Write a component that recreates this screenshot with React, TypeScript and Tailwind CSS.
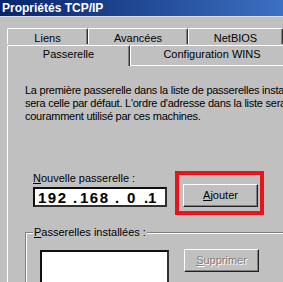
import React from 'react';

const Tab = ({ label, className }: { label: string; className: string }) => (
  <div
    className={`flex justify-center border-l border-t border-white border-r border-r-[#303030] shadow-[inset_-1px_0_0_#808080] rounded-t-[2px] ${className}`}
  >
    {label}
  </div>
);

const RaisedButton = ({ children, disabled }: { children: React.ReactNode; disabled?: boolean }) => (
  <button
    className={`w-[75px] h-[23px] flex items-center justify-center bg-[#c0c0c0] border border-t-white border-l-white border-r-[#202020] border-b-[#202020] shadow-[inset_-1px_-1px_0_#808080] text-[11px] ${
      disabled ? 'text-[#808080] [text-shadow:1px_1px_0_#ffffff]' : 'text-black'
    }`}
  >
    {children}
  </button>
);

export default function App() {
  return (
    <div
      className="w-[283px] h-[282px] overflow-hidden bg-[#c0c0c0] flex flex-col text-[11px] text-black"
      style={{ fontFamily: '"Liberation Sans", Arial, sans-serif' }}
    >
      {/* title bar */}
      <div className="h-[16px] shrink-0 bg-gradient-to-r from-[#0a246a] to-[#3c70c2] flex items-center pl-[2px]">
        <span className="text-white font-bold text-[12px] leading-none">Propriétés TCP/IP</span>
      </div>
      <div className="h-[1px] shrink-0 bg-[#dcdcdc]" />

      {/* tab rows */}
      <div className="pt-[11px] pl-[7px] flex flex-col shrink-0">
        <div className="flex h-[16px] w-[300px]">
          <Tab label="Liens" className="w-[81px] leading-[19px]" />
          <Tab label="Avancées" className="w-[100px] leading-[19px]" />
          <Tab label="NetBIOS" className="w-[95px] leading-[19px]" />
        </div>
        <div className="flex h-[21px] w-[330px] mt-[1px]">
          <Tab label="Passerelle" className="w-[123px] leading-[17px]" />
          <div className="w-[164px] flex flex-col">
            <Tab label="Configuration WINS" className="flex-1 leading-[17px]" />
            <div className="h-[1px] bg-white" />
          </div>
        </div>
      </div>

      {/* panel */}
      <div className="flex-1 ml-[7px] border-l border-white pl-[17px] flex flex-col">
        <div className="mt-[18px] leading-[13px] whitespace-nowrap tracking-[-0.25px]">
          <div>La première passerelle dans la liste de passerelles installées</div>
          <div>sera celle par défaut. L'ordre d'adresse dans la liste sera l'ordre</div>
          <div>couramment utilisé par ces machines.</div>
        </div>

        <div className="mt-[48px] flex items-start">
          <div className="flex flex-col pl-[8px] pt-[1px]">
            <div className="leading-[13px]">
              <span className="underline">N</span>ouvelle passerelle :
            </div>
            <div className="mt-[2px] w-[134px] h-[20px] bg-white border-2 border-t-[#101010] border-l-[#101010] border-r-[#303030] border-b-[#303030] flex items-center pl-[3px] font-bold text-[15px] leading-none">
              <span className="w-[35px] tracking-[1.5px]">192</span>
              <span className="w-[7px]">.</span>
              <span className="w-[35px] tracking-[1.5px]">168</span>
              <span className="w-[12px]">.</span>
              <span className="w-[17px]">0</span>
              <span className="w-[4px]">.</span>
              <span className="w-[10px]">1</span>
            </div>
          </div>
          <div className="ml-[8px] w-[89px] h-[44px] border-4 border-[#e8141c] pl-[4px] pt-[9px]">
            <RaisedButton>
              <span>
                <span className="underline">A</span>jouter
              </span>
            </RaisedButton>
          </div>
        </div>

        {/* group box */}
        <div className="relative mt-[17px] flex-1 border-l border-t border-[#808080] shadow-[inset_1px_1px_0_#ffffff] w-[300px] pl-[14px] pt-[17px] flex items-start">
          <div className="absolute -top-[7px] left-[7px] bg-[#c0c0c0] px-[1px] leading-[13px]">
            <span className="underline">P</span>asserelles installées :
          </div>
          <div className="w-[129px] h-[40px] bg-white border-2 border-t-[#101010] border-l-[#101010] border-r-[#303030] border-b-[#303030]" />
          <div className="ml-[15px] -mt-[1px]">
            <RaisedButton disabled>
              <span>
                <span className="underline">S</span>upprimer
              </span>
            </RaisedButton>
          </div>
        </div>
      </div>
    </div>
  );
}
